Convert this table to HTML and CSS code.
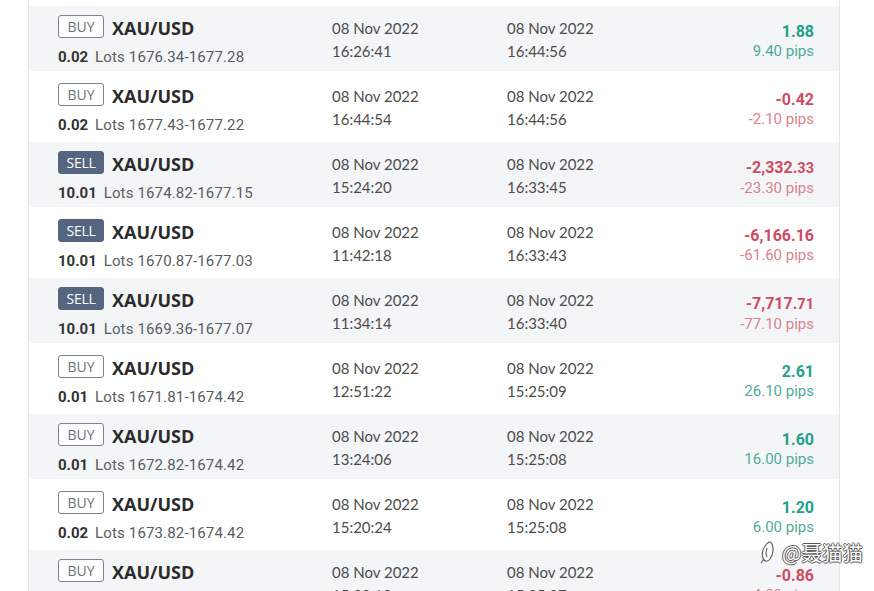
FILE: index.html
```html
<!DOCTYPE html>
<html lang="zh">
<head>
<meta charset="utf-8">
<title>Closed trades</title>
<link rel="stylesheet" href="styles.css">
</head>
<body>
<div class="panel">
  <div class="row">
    <div class="trade">
      <div class="head"><span class="badge buy">BUY</span><span class="sym">XAU/USD</span></div>
      <div class="lots"><b>0.02</b> Lots 1676.34-1677.28</div>
    </div>
    <div class="date">08 Nov 2022<br>16:26:41</div>
    <div class="date">08 Nov 2022<br>16:44:56</div>
    <div class="pl pos"><div class="amt">1.88</div><div class="pips">9.40 pips</div></div>
  </div>
  <div class="row white">
    <div class="trade">
      <div class="head"><span class="badge buy">BUY</span><span class="sym">XAU/USD</span></div>
      <div class="lots"><b>0.02</b> Lots 1677.43-1677.22</div>
    </div>
    <div class="date">08 Nov 2022<br>16:44:54</div>
    <div class="date">08 Nov 2022<br>16:44:56</div>
    <div class="pl neg"><div class="amt">-0.42</div><div class="pips">-2.10 pips</div></div>
  </div>
  <div class="row">
    <div class="trade">
      <div class="head"><span class="badge sell">SELL</span><span class="sym">XAU/USD</span></div>
      <div class="lots"><b>10.01</b> Lots 1674.82-1677.15</div>
    </div>
    <div class="date">08 Nov 2022<br>15:24:20</div>
    <div class="date">08 Nov 2022<br>16:33:45</div>
    <div class="pl neg"><div class="amt">-2,332.<span class="dec">33</span></div><div class="pips">-23.30 pips</div></div>
  </div>
  <div class="row white">
    <div class="trade">
      <div class="head"><span class="badge sell">SELL</span><span class="sym">XAU/USD</span></div>
      <div class="lots"><b>10.01</b> Lots 1670.87-1677.03</div>
    </div>
    <div class="date">08 Nov 2022<br>11:42:18</div>
    <div class="date">08 Nov 2022<br>16:33:43</div>
    <div class="pl neg"><div class="amt">-6,166.16</div><div class="pips">-61.60 pips</div></div>
  </div>
  <div class="row">
    <div class="trade">
      <div class="head"><span class="badge sell">SELL</span><span class="sym">XAU/USD</span></div>
      <div class="lots"><b>10.01</b> Lots 1669.36-1677.07</div>
    </div>
    <div class="date">08 Nov 2022<br>11:34:14</div>
    <div class="date">08 Nov 2022<br>16:33:40</div>
    <div class="pl neg"><div class="amt">-7,717.<span class="dec">71</span></div><div class="pips">-77.10 pips</div></div>
  </div>
  <div class="row white">
    <div class="trade">
      <div class="head"><span class="badge buy">BUY</span><span class="sym">XAU/USD</span></div>
      <div class="lots"><b>0.01</b> Lots 1671.81-1674.42</div>
    </div>
    <div class="date">08 Nov 2022<br>12:51:22</div>
    <div class="date">08 Nov 2022<br>15:25:09</div>
    <div class="pl pos"><div class="amt">2.61</div><div class="pips">26.10 pips</div></div>
  </div>
  <div class="row">
    <div class="trade">
      <div class="head"><span class="badge buy">BUY</span><span class="sym">XAU/USD</span></div>
      <div class="lots"><b>0.01</b> Lots 1672.82-1674.42</div>
    </div>
    <div class="date">08 Nov 2022<br>13:24:06</div>
    <div class="date">08 Nov 2022<br>15:25:08</div>
    <div class="pl pos"><div class="amt">1.60</div><div class="pips">16.00 pips</div></div>
  </div>
  <div class="row white">
    <div class="trade">
      <div class="head"><span class="badge buy">BUY</span><span class="sym">XAU/USD</span></div>
      <div class="lots"><b>0.02</b> Lots 1673.82-1674.42</div>
    </div>
    <div class="date">08 Nov 2022<br>15:20:24</div>
    <div class="date">08 Nov 2022<br>15:25:08</div>
    <div class="pl pos"><div class="amt">1.20</div><div class="pips">6.00 pips</div></div>
  </div>
  <div class="row">
    <div class="trade">
      <div class="head"><span class="badge buy">BUY</span><span class="sym">XAU/USD</span></div>
      <div class="lots"><b>0.02</b> Lots 1674.70-1674.27</div>
    </div>
    <div class="date">08 Nov 2022<br>15:20:10</div>
    <div class="date">08 Nov 2022<br>15:25:07</div>
    <div class="pl neg"><div class="amt">-0.86</div><div class="pips">-4.30 pips</div></div>
  </div>
</div>
<div class="watermark">
  <svg class="wb" width="18" height="24" viewBox="0 0 18 24">
    <path d="M9 2 C4 5 1 12 3 18 C4 22 8 22 10 19 C13 15 14 8 12 4 C11 2 10 1.5 9 2 Z" fill="#fff" stroke="#666" stroke-width="1.2"/>
    <path d="M7 8 C6 11 6 15 7 17" fill="none" stroke="#666" stroke-width="1.2"/>
    <path d="M1 23 L4 19" fill="none" stroke="#666" stroke-width="1.2"/>
  </svg>
  <span class="wm-text">@聂猫猫</span>
</div>
</body>
</html>
```
FILE: styles.css
```css
html, body {
  margin: 0;
  padding: 0;
  background: #ffffff;
  overflow: hidden;
}

body {
  width: 874px;
  height: 591px;
  position: relative;
}

.panel {
  margin-left: 28px;
  width: 812px;
  box-sizing: border-box;
  padding-top: 6px;
  border-left: 1px solid #e3e5e9;
  border-right: 1px solid #e3e5e9;
}

.row {
  display: grid;
  grid-template-columns: 274px 175px 1fr auto;
  align-items: start;
  height: 65px;
  box-sizing: border-box;
  padding: 9px 25px 0 29px;
  background: #f4f5f7;
}

.row.white {
  background: #ffffff;
  height: 71px;
  padding-top: 12px;
}

.head {
  display: flex;
  align-items: flex-start;
  gap: 8px;
  height: 23px;
}

.badge {
  width: 46px;
  height: 23px;
  box-sizing: border-box;
  border-radius: 3px;
  text-align: center;
  font: 400 14px/22px "Open Sans", "Noto Sans", sans-serif;
}

.badge.buy {
  border: 1px solid #7c838e;
  color: #6e737b;
  background: #ffffff;
}

.badge.sell {
  border: 1px solid #56657f;
  background: #56657f;
  color: #ffffff;
  letter-spacing: -0.3px;
}

.sym {
  padding-top: 2px;
  font: 700 18px/23px "Open Sans", "Noto Sans", sans-serif;
  color: #2b2b2b;
}

.lots {
  margin-top: 9px;
  font: 400 15px/20px Roboto, "Noto Sans", sans-serif;
  letter-spacing: 0.15px;
  color: #585d63;
  white-space: nowrap;
}

.lots b {
  font-weight: 700;
  color: #333333;
  letter-spacing: 0;
  margin-right: 3px;
}

.date {
  padding-top: 2px;
  font: 400 15px/23px Lato, "Open Sans", sans-serif;
  color: #4c4c4c;
}

.pl {
  text-align: right;
  padding-top: 7px;
  font-family: Roboto, "Noto Sans", sans-serif;
}

.amt {
  font-weight: 700;
  font-size: 16px;
  line-height: 20px;
}

.amt .dec {
  font-size: 14.5px;
}

.pips {
  font-size: 15px;
  line-height: 18px;
}

.pos .amt { color: #22a08b; }
.pos .pips { color: #4fab9d; }
.neg .amt { color: #cf4b62; }
.neg .pips { color: #d9838c; }

.watermark {
  position: absolute;
  left: 760px;
  top: 540px;
  display: flex;
  align-items: center;
  gap: 4px;
}

.wm-text {
  font: 400 20.5px/24px "Noto Sans CJK SC", sans-serif;
  color: #ffffff;
  text-shadow: -1px 0 #5a5a5a, 1px 0 #5a5a5a, 0 -1px #5a5a5a, 0 1px #5a5a5a;
}
```
